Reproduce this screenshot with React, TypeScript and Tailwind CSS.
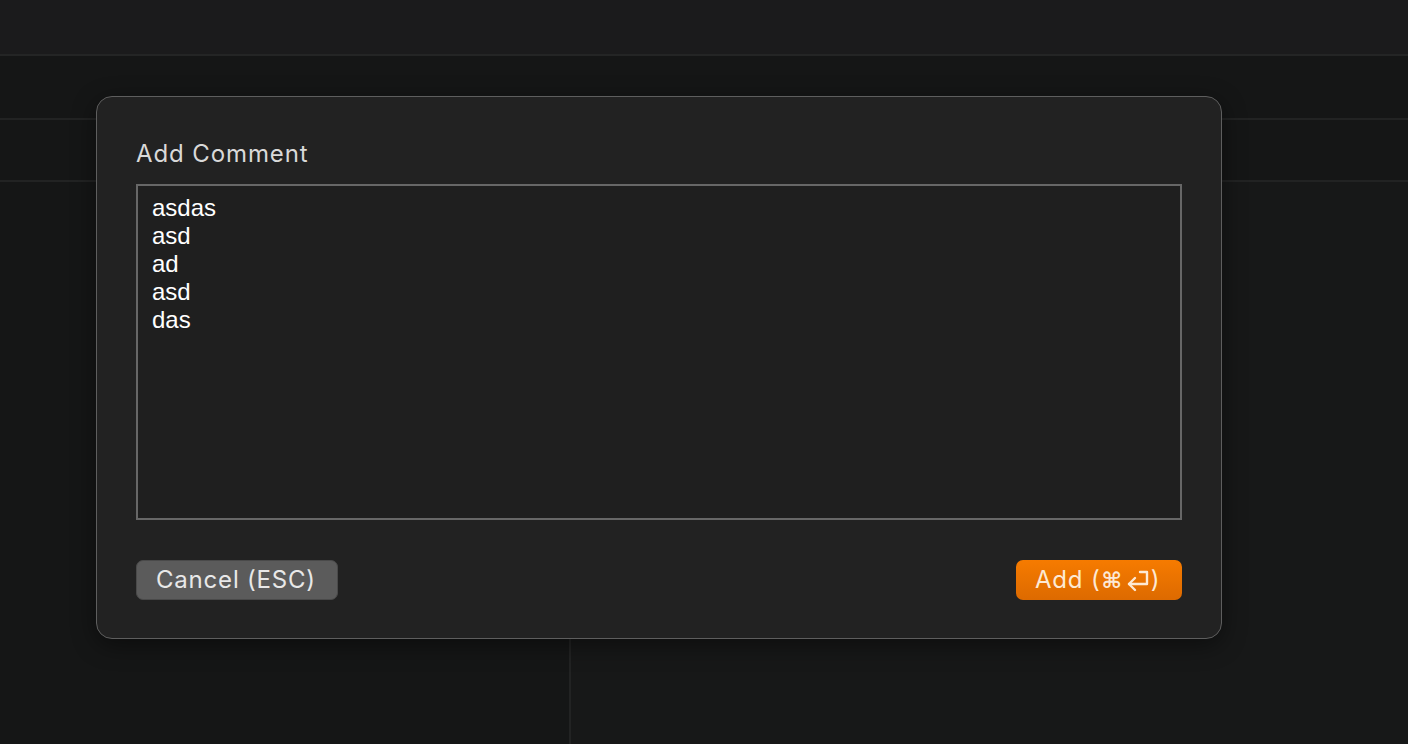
import React from "react";

export default function App() {
  const lines = ["asdas", "asd", "ad", "asd", "das"];
  return (
    <div className="relative w-[1408px] h-[744px] overflow-hidden bg-[#151616]" style={{ fontFamily: "Inter, 'Liberation Sans', sans-serif" }}>
      <div className="flex flex-col h-[744px]">
        <div className="h-[56px] shrink-0 bg-[#1b1b1c] border-b-2 border-[#242525]" />
        <div className="h-[64px] shrink-0 border-b-2 border-[#222323]" />
        <div className="h-[62px] shrink-0 border-b-2 border-[#222323]" />
        <div className="flex grow">
          <div className="w-[571px] border-r-2 border-[#222323]" />
          <div className="grow bg-[#171818]" />
        </div>
      </div>

      <div className="absolute left-[96px] top-[96px] w-[1126px] h-[543px] rounded-[16px] border border-[#5e5e5e] bg-[#222222] shadow-[0_6px_24px_rgba(0,0,0,0.45)] px-[39px] pt-[39px] flex flex-col">
        <div className="h-[48px] text-[24px] leading-[36px] text-[#d9d9d9] tracking-[0.9px]">Add Comment</div>
        <div className="h-[336px] border-2 border-[#676767] bg-[#1f1f1f] pl-[14px] pt-[8px]" style={{ fontFamily: "'Liberation Sans', Arial, sans-serif" }}>
          {lines.map((l, i) => (
            <div key={i} className="text-[24px] leading-[28px] text-white">{l}</div>
          ))}
        </div>
        <div className="flex justify-between mt-[40px]">
          <div className="h-[40px] w-[202px] rounded-[7px] bg-[#5b5b5b] border border-[#4a4a4a] pl-[19px] flex items-center text-[24px] tracking-[0.8px] text-[#e8e8e8]">
            Cancel (ESC)
          </div>
          <div className="h-[40px] w-[166px] rounded-[7px] bg-gradient-to-b from-[#f67b00] to-[#dd6a00] pl-[19px] flex items-center text-[24px] tracking-[0.8px] text-[#fde9d4]">
            <span>Add (</span>
            <span style={{ fontFamily: "'DejaVu Sans', sans-serif" }} className="text-[22px] ml-[1px] font-bold">⌘</span>
            <svg width="26" height="24" viewBox="0 0 26 24" className="ml-[2px]" fill="none" stroke="#fde9d4" strokeWidth="2.4" strokeLinecap="round" strokeLinejoin="round">
              <path d="M15 4h7v12H4" />
              <path d="M10 10l-6 6 6 6" />
            </svg>
            <span>)</span>
          </div>
        </div>
      </div>
    </div>
  );
}
